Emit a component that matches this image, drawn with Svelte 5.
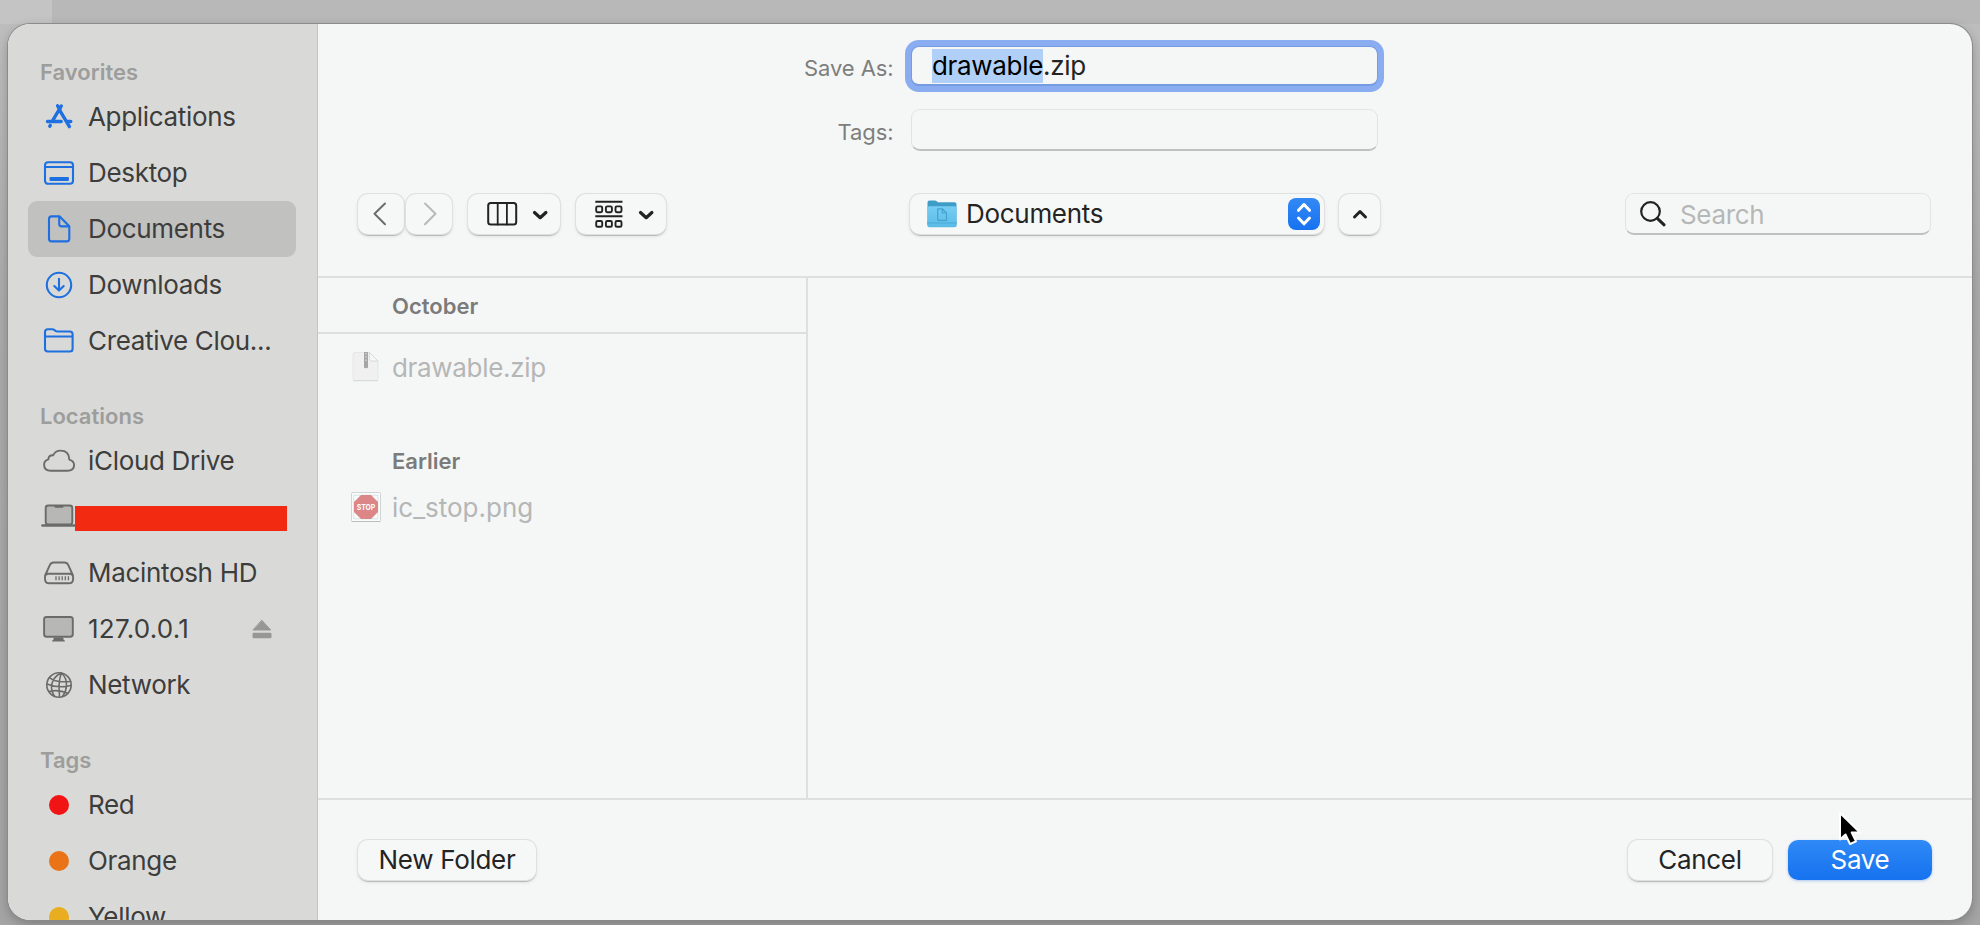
<script>
  const favorites = [
    { icon: 'apps', label: 'Applications' },
    { icon: 'desktop', label: 'Desktop' },
    { icon: 'doc', label: 'Documents', selected: true },
    { icon: 'download', label: 'Downloads' },
    { icon: 'folder', label: 'Creative Clou...' }
  ];
  const locations = [
    { icon: 'cloud', label: 'iCloud Drive' },
    { icon: 'laptop', label: '', redacted: true },
    { icon: 'drive', label: 'Macintosh HD' },
    { icon: 'display', label: '127.0.0.1', eject: true },
    { icon: 'globe', label: 'Network' }
  ];
  const tags = [
    { color: '#f21414', label: 'Red' },
    { color: '#ea7317', label: 'Orange' },
    { color: '#e8ae20', label: 'Yellow' }
  ];
  const groups = [
    { title: 'Favorites', items: favorites },
    { title: 'Locations', items: locations },
    { title: 'Tags', items: tags }
  ];
</script>

{#snippet glyph(name)}
  <svg class="glyph" class:blue={favorites.some((f) => f.icon === name)} viewBox="0 0 36 32" width="36" height="32">
    {#if name === 'apps'}
      <g stroke-width="3.4">
        <path d="M20.3 5 11.2 20.3M16.6 4.8l2.6 4.4M6.5 20.5h13.7M25.3 20.5h4.5M19.8 11.2l8.6 14.4" />
        <path d="M8.8 25.2l.5-.8" />
      </g>
    {:else if name === 'desktop'}
      <rect x="4" y="5.2" width="28" height="21.6" rx="3" /><path d="M4 10h28" />
      <rect x="8.5" y="20" width="19.4" height="4" rx="1" fill="currentColor" stroke="none" />
    {:else if name === 'doc'}
      <path d="M10.5 3.4h8.2l9.6 9.8v12.6q0 2.6-2.6 2.6H10.600q-2.600 0-2.600-2.600V6q0-2.600 2.500-2.600zM18.200 3.800v7.200q0 2.400 2.400 2.400h7.400" />
    {:else if name === 'download'}
      <circle cx="18" cy="16" r="12.200" /><path d="M18 9.800v11.600M13.300 17l4.700 4.600 4.700-4.600" />
    {:else if name === 'folder'}
      <path d="M4 23.700V7q0-2.800 2.800-2.800h4.500q1.200 0 2.200.9l1 .8q.8.600 2 .6h12.300q2.800 0 2.800 2.800v14.400q0 2.800-2.800 2.800h-22Q4 26.500 4 23.700zM4 11.500h27.600" />
    {:else if name === 'cloud'}
      <path d="M9.800 25.800h16.500q6.800 0 6.800-5.700 0-4.300-4.800-5.500-.1-9-8.900-9-5 0-7.300 4.700-4.400-.3-4.800 4-4.200 1.200-4.200 5.400 0 6.100 6.700 6.100z" />
    {:else if name === 'laptop'}
      <rect x="4.700" y="4.500" width="26.600" height="19" rx="2.500" fill="#b7b7b5" />
      <path d="M14.500 5.800h7" stroke-width="2" /><path d="M1.500 24.500h33" stroke-width="2.600" />
    {:else if name === 'drive'}
      <path d="M4.100 18.500 8.800 8.200q1.200-2.700 3.900-2.700h10.700q2.700 0 3.900 2.700L32 18.500M7.500 16.700h21q3.600 0 3.600 3.600v1.600q0 4.300-4.300 4.300H8.300Q4 26.200 4 21.900v-1.600q0-3.600 3.500-3.600z" />
      <path d="M15 19.300v4M18.100 19.300v4M21.200 19.300v4M24.300 19.300v4M27.400 19.300v4" stroke-width="1.300" stroke-linecap="butt" />
    {:else if name === 'display'}
      <rect x="3.100" y="4" width="28.700" height="19.700" rx="2.400" fill="#b7b7b5" />
      <path d="M12.800 24.500h9.400l.4 2.300q1.300 0 1.300 1.700H11.100q0-1.700 1.300-1.700z" fill="currentColor" stroke="none" />
    {:else if name === 'globe'}
      <g stroke-width="1.600">
        <circle cx="18" cy="16" r="12.200" />
        <path d="M20 4q-8 4-9.500 12.500-.5 5 3 11M20.500 4q-3.500 8-2 23.500M20.500 4q5.500 5 5 13-.5 6-4 10.500M8.500 8.500Q14 14 29.500 12.500M6 15q10 4.500 24 1.500M8 22.500q9-2.500 19 1.800" />
      </g>
    {/if}
  </svg>
{/snippet}

<div class="screen">
  <div class="dialog">
    <aside>
      {#each groups as group}
        <h2>{group.title}</h2>
        <ul>
          {#each group.items as item}
            <li class:selected={item.selected}>
              {#if item.color}
                <span class="dot" style="background:{item.color}"></span>
              {:else}
                {@render glyph(item.icon)}
              {/if}
              {#if item.redacted}
                <span class="redacted"></span>
              {:else}
                <span class="name" class:address={item.eject}>{item.label}</span>
              {/if}
              {#if item.eject}
                <svg class="eject" viewBox="0 0 20 20" width="20" height="20">
                  <path d="M10 1.500 18.700 11H1.300z" stroke-linejoin="round" stroke-width="1" stroke="#979796" /><rect x=".5" y="13.800" width="19" height="5.400" rx="1.200" />
                </svg>
              {/if}
            </li>
          {/each}
        </ul>
      {/each}
    </aside>

    <main>
      <header>
        <div class="field-row first">
          <span class="label">Save As:</span>
          <div class="field focused"><span class="sel">drawable</span><span>.zip</span></div>
        </div>
        <div class="field-row second">
          <span class="label">Tags:</span>
          <div class="field"></div>
        </div>
        <div class="toolbar">
          <div class="left">
            <div class="btn nav">
              <svg viewBox="0 0 46 40" width="46" height="40"><path d="M27 9.500 16.500 19.800 27 30.200" stroke="#6d6d6d" stroke-width="2" /></svg>
            </div>
            <div class="btn nav">
              <svg viewBox="0 0 46 40" width="46" height="40"><path d="M19 9.500 29.500 19.800 19 30.200" stroke="#b8b9b9" stroke-width="2" /></svg>
            </div>
            <div class="btn view">
              <svg viewBox="0 0 92 40" width="92" height="40">
                <rect x="20.200" y="9" width="28" height="21.600" rx="2.600" stroke-width="2" />
                <path d="M29.700 9v21.600M38.900 9v21.600" stroke-width="1.800" /><path d="M66.500 18.500l5.700 5.200 5.700-5.200" stroke-width="3.200" />
              </svg>
            </div>
            <div class="btn group">
              <svg viewBox="0 0 90 40" width="90" height="40">
                <path d="M19.300 7.700h27.200M19.300 22.200h27.200" stroke-width="2" stroke-linecap="butt" />
                {#each [12.400, 27] as y}
                  {#each [20.200, 29.900, 39.500] as x}
                    <rect {x} {y} width="6" height="5.800" rx="1.400" stroke-width="1.900" />
                  {/each}
                {/each}
                <path d="M64.500 18.500l5.700 5.200 5.700-5.200" stroke-width="3.200" />
              </svg>
            </div>
          </div>
          <div class="center">
            <div class="btn popup">
              <svg viewBox="0 0 30 30" width="30" height="30">
                <defs>
                  <linearGradient id="fold" x1="0" y1="0" x2="0" y2="1"><stop offset="0" stop-color="#76cdf4" /><stop offset="1" stop-color="#5abbe6" /></linearGradient>
                </defs>
                <path d="M.5 26V3.500Q.5 1.500 2.500 1.500H8q1 0 1.800.8l1 .9h16.700q2 0 2 2V26q0 2-2 2h-25q-2 0-2-2z" fill="#3e9dc7" />
                <path d="M.5 9q0-1.800 1.800-1.800h25.400q1.800 0 1.800 1.800v17.500q0 1.800-1.800 1.800H2.300Q.5 28.300.5 26.500z" fill="url(#fold)" />
                <path d="M.5 24h29" stroke="#48a9d5" stroke-width="1" />
                <path d="M11.500 9.800h4l4 4v7.500h-8.800v-11.500zM15.300 9.800v4.200h4.200" stroke="#43a2cf" stroke-width="1.200" />
              </svg>
              <span class="current">Documents</span>
              <svg class="step" viewBox="0 0 32 32" width="32" height="32"><path d="M10.500 12.300 16 6.500l5.500 5.800M10.500 20 16 25.800l5.500-5.800" /></svg>
            </div>
            <div class="btn up">
              <svg viewBox="0 0 40 40" width="40" height="40"><path d="M14.500 23l5.500-5.500 5.500 5.500" stroke-width="3" /></svg>
            </div>
          </div>
          <div class="field search">
            <svg viewBox="0 0 30 30" width="30" height="30"><circle cx="12.500" cy="12.500" r="9.300" stroke-width="2.200" /><path d="M19.300 19.300l6.800 6.500" stroke-width="3" /></svg>
            <span>Search</span>
          </div>
        </div>
      </header>

      <section class="browser">
        <div class="column">
          <h3 class="month">October</h3>
          <div class="file zip">
            <svg viewBox="0 0 30 32" width="30" height="32">
              <path d="M3.500 1.500h15l8.500 8.500v17.500q0 2-2 2h-21q-2 0-2-2V3.500q0-2 1.500-2z" fill="#f0f0f0" stroke="#e2e3e3" stroke-width=".8" />
              <path d="M2.500 29.700h24" stroke="#d6d7d7" stroke-width="1" />
              <path d="M18.500 1.500 27 10h-6.500q-2 0-2-2z" fill="#f7f7f7" stroke="#d2d3d3" stroke-width=".8" />
              <path d="M13 1v15.500q0 .8 2 .8t2-.8V1z" fill="#a6a6a6" stroke="none" /><path d="M15 2v10" stroke="#d8d8d8" stroke-width="1.300" stroke-dasharray="1.500 1.800" stroke-linecap="butt" />
            </svg>
            <span>drawable.zip</span>
          </div>
          <h3 class="earlier">Earlier</h3>
          <div class="file image">
            <svg class="png" viewBox="0 0 30 30" width="30" height="30">
              <rect x=".5" y=".5" width="29" height="29" rx="1" fill="#fbfbfb" stroke="#d2d3d3" />
              <path d="M1 29.500h28" stroke="#bcbcbc" stroke-width="1" />
              <rect x="3.200" y="3.200" width="23.600" height="23.600" fill="none" stroke="#bfdcdc" stroke-width=".7" />
              <path d="M10 3h10l7 7v10l-7 7H10l-7-7V10z" fill="#dc8687" stroke="none" />
              <text x="15" y="17.800" text-anchor="middle" textLength="18.500" lengthAdjust="spacingAndGlyphs">STOP</text>
            </svg>
            <span>ic_stop.png</span>
          </div>
        </div>
        <div class="empty"></div>
      </section>

      <footer>
        <button class="btn new">New Folder</button>
        <button class="btn cancel">Cancel</button>
        <button class="btn save">Save</button>
      </footer>
    </main>
  </div>
  <svg class="cursor" viewBox="0 0 28 38" width="28" height="38">
    <path d="M4 3v26.500l5.500-5 4.500 9.500 6-2.600-4.300-8.900h8.300z" fill="#000" stroke="#fff" stroke-width="2" stroke-linejoin="round" />
  </svg>
</div>

<style>
  :global(body) { margin: 0; overflow: hidden; }
  * { box-sizing: border-box; }
  .screen {
    position: relative; width: 1980px; height: 925px; padding: 24px 8px 5px; overflow: hidden;
    background: linear-gradient(90deg, #c4c4c4 0 52px, #b8b8b8 52px) top / 100% 24px no-repeat,
      linear-gradient(#bfbfbf, #acacac 300px, #a5a5a5);
    font-family: Inter, "Liberation Sans", sans-serif; font-size: 26px; letter-spacing: -.32px; color: #242424;
  }
  .dialog {
    display: flex; width: 1964px; height: 896px; border-radius: 22px; overflow: hidden; background: #f5f7f6;
    box-shadow: 0 0 0 1px #8b8b8b, 0 4px 12px rgba(0, 0, 0, .25);
  }
  svg { display: block; flex: none; fill: none; stroke: #222; stroke-linecap: round; stroke-linejoin: round; }
  aside { width: 310px; flex: none; background: #d9dad8; border-right: 1px solid #c3c4c3; overflow: hidden; padding: 1px 21px 0 20px; }
  h2 { margin: 0; height: 64px; padding: 33px 0 0 12px; font-size: 22px; line-height: 28px; font-weight: 600; color: #9d9d9c; letter-spacing: 0; }
  ul { margin: 0; padding: 0; list-style: none; }
  li { display: flex; align-items: center; height: 56px; border-radius: 9px; padding: 0 26px 0 13px; color: #3d3d3c; }
  li.selected { background: #c1c1c0; }
  .glyph { color: #6b6b6a; stroke: currentColor; stroke-width: 1.900; }
  .glyph.blue { color: #1e6fe0; stroke-width: 2.100; }
  .name { margin-left: 11px; line-height: 32px; white-space: nowrap; }
  .address { letter-spacing: .25px; }
  .dot { width: 20px; height: 20px; border-radius: 50%; margin: 0 8px; }
  .redacted { width: 212px; height: 25px; margin: 3px -30px 0 -2px; background: #f22a12; flex: none; z-index: 1; }
  .eject { margin-left: auto; margin-right: -2px; fill: #979796; stroke: none; }

  main { flex: 1; min-width: 0; display: flex; flex-direction: column; }
  header { height: 254px; flex: none; border-bottom: 2px solid #dedfdf; padding-top: 22px; }
  .field-row { display: flex; align-items: center; }
  .label { width: 575.500px; text-align: right; font-size: 22px; color: #7d7e7e; letter-spacing: -.1px; line-height: 28px; padding-top: 3px; }
  .field {
    display: flex; align-items: center; height: 42px; width: 467px; border-radius: 9px; margin-left: 17.500px;
    border: 1px solid #e2e3e3; border-bottom: 2px solid #bfc0c0; background: #f5f7f6;
  }
  .field.focused { height: 40px; border-color: #759be0; box-shadow: 0 0 0 6px #8aacf0; padding-left: 20px; color: #242424; line-height: 34px; padding-top: 1px; border-radius: 8px; }
  .sel { background: #b0d0f7; color: #000; }
  .second { margin-top: 23px; }
  .toolbar { display: flex; margin-top: 42px; height: 42px; padding: 0 41px 0 40px; align-items: center; }
  .left { display: flex; width: 552px; }
  .btn {
    display: flex; align-items: center; justify-content: center; height: 40px; border-radius: 10px; background: #f6f8f7; border: 0; padding: 0;
    box-shadow: 0 0 0 1px #dfe0e0, 0 1.500px 1px #b5b6b6, 0 2px 4px rgba(0, 0, 0, .1);
    font: inherit; color: #242424; letter-spacing: -.3px;
  }
  .nav { width: 46px; margin-right: 2px; }
  .view { width: 92px; margin-left: 14px; margin-right: 16px; }
  .group { width: 90px; }
  .center { display: flex; }
  .popup { width: 414px; justify-content: flex-start; padding: 0 4px 0 17px; }
  .popup svg { stroke: none; }
  .current { margin-left: 9px; padding-bottom: 1px; }
  .popup .step { margin-left: auto; border-radius: 8px; background: linear-gradient(#3389f5, #1672ef); stroke: #fff; stroke-width: 3; }
  .up { width: 41px; margin-left: 15px; }
  .search { width: 306px; margin-left: auto; color: #b6b7b7; padding-left: 12px; }
  .search span { margin-left: 12px; padding-top: 2px; }

  .browser { flex: 1; display: flex; border-bottom: 2px solid #dedfdf; }
  .column { width: 490px; border-right: 2px solid #dedfdf; }
  .empty { flex: 1; }
  h3 { margin: 0; padding-left: 74px; font-size: 22px; line-height: 28px; font-weight: 600; color: #7b7b7b; letter-spacing: 0; }
  .month { height: 56px; padding-top: 14px; border-bottom: 2px solid #dddede; }
  .file { display: flex; align-items: center; height: 56px; padding-left: 33px; color: #b5b6b6; }
  .file span { margin-left: 11px; }
  .zip { margin-top: 5px; }
  .earlier { margin-top: 50px; height: 34px; padding-top: 2px; }
  .image { letter-spacing: 0; }
  .png text { font: 700 7.500px Inter, sans-serif; letter-spacing: 0; fill: #fff; stroke: none; }

  footer { height: 120px; flex: none; display: flex; align-items: center; padding: 0 40px; }
  footer .btn { padding-bottom: 1px; }
  .new { width: 178px; }
  .cancel { width: 144px; margin-left: auto; margin-right: 16px; }
  .save { width: 144px; color: #fff; background: linear-gradient(#2f89f6, #1672ef); box-shadow: 0 1px 3px rgba(30, 100, 220, .35); }
  .cursor { position: absolute; left: 1836px; top: 810px; }
</style>
